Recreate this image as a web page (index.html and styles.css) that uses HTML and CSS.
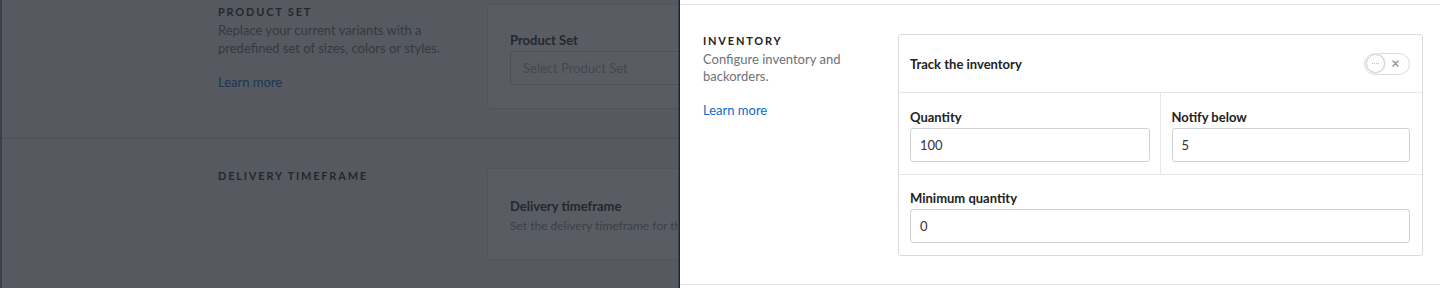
FILE: index.html
```html
<!DOCTYPE html>
<html lang="en">
<head>
<meta charset="utf-8">
<title>Inventory</title>
<link rel="stylesheet" href="styles.css">
</head>
<body>
<div class="app">
  <main class="page">
    <section class="psection first">
      <div class="pinfo">
        <h3 class="ptitle">PRODUCT SET</h3>
        <p class="pdesc">Replace your current variants with a predefined set of sizes, colors or styles.</p>
        <a class="plink" href="#">Learn more</a>
      </div>
      <div class="pcard">
        <div class="plabel">Product Set</div>
        <div class="pinput">Select Product Set</div>
      </div>
    </section>
    <section class="psection">
      <div class="pinfo">
        <h3 class="ptitle">DELIVERY TIMEFRAME</h3>
      </div>
      <div class="pcard delivery">
        <div class="plabel">Delivery timeframe</div>
        <div class="psub">Set the delivery timeframe for this product</div>
      </div>
    </section>
  </main>
  <div class="overlay"></div>
  <aside class="panel">
    <div class="panel-prev"></div>
    <section class="isection">
      <div class="iinfo">
        <h3 class="ititle">INVENTORY</h3>
        <p class="idesc">Configure inventory and backorders.</p>
        <a class="ilink" href="#">Learn more</a>
      </div>
      <div class="icard">
        <div class="icard-head">
          <span class="ilabel">Track the inventory</span>
          <span class="toggle">
            <span class="knob"><span class="dots"></span></span>
            <svg class="toggle-x" width="7" height="7" viewBox="0 0 7 7"><path d="M1 1L6 6M6 1L1 6" stroke="#9a9a9a" stroke-width="1.6" stroke-linecap="round"/></svg>
          </span>
        </div>
        <div class="irow two">
          <div class="ifield split">
            <div class="ilabel">Quantity</div>
            <div class="iinput">100</div>
          </div>
          <div class="ifield">
            <div class="ilabel">Notify below</div>
            <div class="iinput">5</div>
          </div>
        </div>
        <div class="irow last">
          <div class="ifield">
            <div class="ilabel">Minimum quantity</div>
            <div class="iinput">0</div>
          </div>
        </div>
      </div>
    </section>
  </aside>
</div>
</body>
</html>
```

FILE: styles.css
```css
* { box-sizing: border-box; }
html, body { margin: 0; padding: 0; }
body {
  font-family: Lato, "Open Sans", "Liberation Sans", sans-serif;
  font-size: 13px;
  color: #222;
  background: #f4f5f6;
  overflow: hidden;
}
.app {
  position: relative;
  width: 1440px;
  height: 288px;
  overflow: hidden;
}

/* underlying page */
.page {
  height: 288px;
  border-left: 2px solid #868b92;
}
.psection {
  display: flex;
  padding: 29px 0 29px 216px;
  border-bottom: 1px solid #c5c9ce;
}
.psection.first { padding-top: 4px; }
.pinfo { width: 269px; flex: none; }
.ptitle {
  margin: 0;
  font-size: 11px;
  line-height: 15px;
  font-weight: 700;
  letter-spacing: 1.8px;
  color: #2b2f33;
}
.pdesc {
  margin: 2px 0 0;
  width: 245px;
  font-size: 13px;
  line-height: 18px;
  color: #6c7278;
}
.plink {
  display: block;
  margin-top: 17px;
  line-height: 17px;
  color: #006bcb;
  text-decoration: none;
}
.pcard {
  width: 560px;
  background: #fff;
  border: 1px solid #d8dbde;
  border-radius: 3px;
  padding: 27px 22px 23px;
}
.pcard.delivery { padding: 29px 22px 25px; }
.plabel {
  font-weight: 700;
  line-height: 16px;
  color: #2b2f33;
}
.pinput {
  margin-top: 3px;
  height: 34px;
  border: 1px solid #d0d3d6;
  border-radius: 3px;
  padding: 0 12px;
  line-height: 32px;
  color: #a9adb2;
  width: 420px;
}
.psub {
  margin-top: 4px;
  font-size: 12px;
  line-height: 16px;
  color: #8b9096;
}

.overlay {
  position: absolute;
  inset: 0;
  background: rgba(33, 38, 46, 0.75);
}

/* side panel */
.panel {
  position: absolute;
  top: 0;
  right: 0;
  bottom: 0;
  left: 680px;
  background: #fff;
  box-shadow: -1px 0 0 #1c2632, -2px 0 0 #3a4350;
}
.panel-prev {
  height: 5px;
  border-bottom: 1px solid #e4e6e8;
}
.isection {
  display: flex;
  padding: 29px 17px 28px 23px;
  border-bottom: 1px solid #e4e6e8;
}
.iinfo { width: 195px; flex: none; }
.ititle {
  margin: 0;
  font-size: 11px;
  line-height: 14px;
  font-weight: 700;
  letter-spacing: 1.8px;
  color: #222;
}
.idesc {
  margin: 3px 0 0;
  font-size: 13px;
  line-height: 17px;
  color: #6c7278;
  width: 180px;
}
.ilink {
  display: block;
  margin-top: 17px;
  line-height: 17px;
  color: #0b6bcb;
  text-decoration: none;
}
.icard {
  flex: 1;
  border: 1px solid #d9dbdd;
  border-radius: 3px;
}
.icard-head {
  height: 58px;
  display: flex;
  align-items: center;
  justify-content: space-between;
  padding: 0 12px 0 11px;
  border-bottom: 1px solid #e6e7e8;
}
.ilabel {
  font-weight: 700;
  font-size: 13px;
  line-height: 16px;
  color: #222;
}
.toggle {
  width: 46px;
  height: 22px;
  border: 1px solid #dcdcdc;
  border-radius: 11px;
  display: flex;
  align-items: center;
  justify-content: space-between;
  padding: 0 10px 0 1px;
}
.knob {
  width: 19px;
  height: 19px;
  border-radius: 50%;
  border: 1px solid #cfcfcf;
  background: #fff;
  box-shadow: 0 0 0 1px #f0f0f0;
  display: flex;
  align-items: center;
  justify-content: center;
}
.dots {
  width: 8px;
  height: 1px;
  background-image: linear-gradient(90deg, #b8b8b8 50%, transparent 50%);
  background-size: 2px 1px;
}
.toggle-x { display: block; }
.irow {
  border-bottom: 1px solid #e6e7e8;
}
.irow.two {
  display: grid;
  grid-template-columns: 1fr 1fr;
}
.irow.last { border-bottom: none; }
.ifield {
  padding: 16px 12px 12px 11px;
}
.irow.last .ifield { padding-top: 15px; }
.ifield.split { border-right: 1px solid #e6e7e8; padding-right: 10px; }
.iinput {
  margin-top: 3px;
  height: 34px;
  border: 1px solid #cfd2d5;
  border-radius: 3px;
  padding: 0 9px;
  line-height: 32px;
  font-size: 13px;
  color: #333;
}
```
